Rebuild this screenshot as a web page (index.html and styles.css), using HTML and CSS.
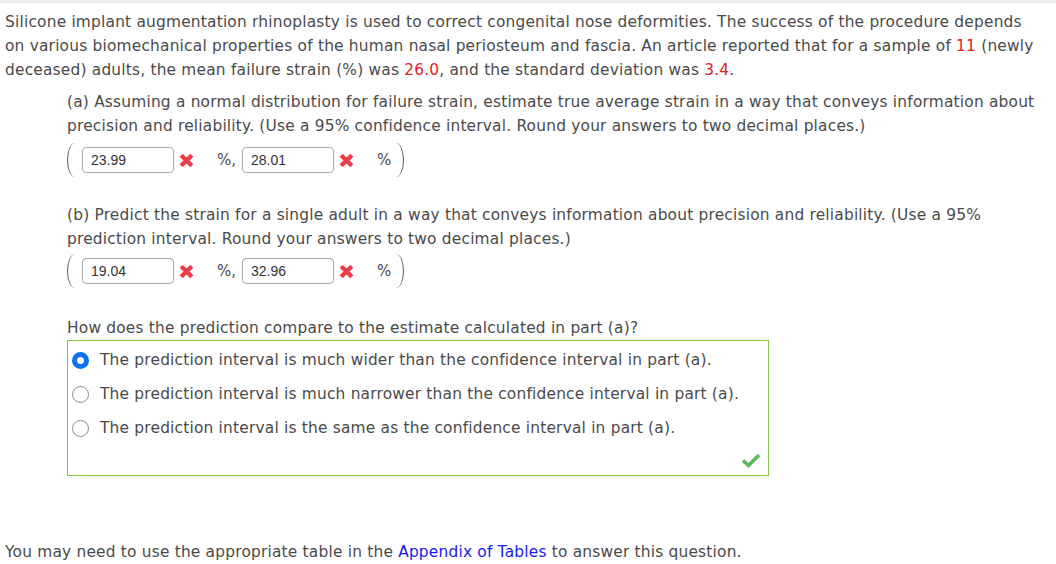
FILE: index.html
```html
<!DOCTYPE html>
<html>
<head>
<meta charset="utf-8">
<link rel="stylesheet" href="styles.css">
</head>
<body>
<div class="topbar"></div>
<p class="intro">Silicone implant augmentation rhinoplasty is used to correct congenital nose deformities. The success of the procedure depends on various biomechanical properties of the human nasal periosteum and fascia. An article reported that for a sample of <span class="red">11</span> (newly deceased) adults, the mean failure strain (%) was <span class="red">26.0</span>, and the standard deviation was <span class="red">3.4</span>.</p>

<div class="part">
  <p class="ptext">(a) Assuming a normal distribution for failure strain, estimate true average strain in a way that conveys information about precision and reliability. (Use a 95% confidence interval. Round your answers to two decimal places.)</p>
  <div class="answer-row rowa">
    <span class="paren left"></span>
    <span class="box">23.99</span>
    <svg class="xicon" viewBox="0 0 14 14"><path d="M2 2 L12 12 M12 2 L2 12"/></svg>
    <span class="unit">%,</span>
    <span class="box">28.01</span>
    <svg class="xicon" viewBox="0 0 14 14"><path d="M2 2 L12 12 M12 2 L2 12"/></svg>
    <span class="unit last">%</span>
    <span class="paren right"></span>
  </div>
</div>

<div class="part partb">
  <p class="ptext">(b) Predict the strain for a single adult in a way that conveys information about precision and reliability. (Use a 95% prediction interval. Round your answers to two decimal places.)</p>
  <div class="answer-row">
    <span class="paren left"></span>
    <span class="box">19.04</span>
    <svg class="xicon" viewBox="0 0 14 14"><path d="M2 2 L12 12 M12 2 L2 12"/></svg>
    <span class="unit">%,</span>
    <span class="box">32.96</span>
    <svg class="xicon" viewBox="0 0 14 14"><path d="M2 2 L12 12 M12 2 L2 12"/></svg>
    <span class="unit last">%</span>
    <span class="paren right"></span>
  </div>
</div>

<div class="part partc">
  <p class="ptext">How does the prediction compare to the estimate calculated in part (a)?</p>
  <div class="choices">
    <div class="choice"><span class="radio on"></span>The prediction interval is much wider than the confidence interval in part (a).</div>
    <div class="choice"><span class="radio"></span>The prediction interval is much narrower than the confidence interval in part (a).</div>
    <div class="choice"><span class="radio"></span>The prediction interval is the same as the confidence interval in part (a).</div>
    <svg class="check" viewBox="0 0 20 16"><path d="M2 8.5 L7.5 13.5 L18 3"/></svg>
  </div>
</div>

<p class="footer">You may need to use the appropriate table in the <a href="#">Appendix of Tables</a> to answer this question.</p>
</body>
</html>
```

FILE: styles.css
```css
html, body {
  margin: 0;
  padding: 0;
  background: #fff;
}
body {
  font-family: "DejaVu Sans", Verdana, sans-serif;
  font-size: 15.4px;
  letter-spacing: 0.2px;
  line-height: 24px;
  color: #4a4a4a;
}
.topbar {
  height: 3px;
  background: #ececec;
}
.intro {
  margin: 7px 0 0 0;
  padding: 0 20px 0 5px;
}
.red { color: #e0201b; }
.part {
  margin: 8px 0 0 67px;
  padding-right: 16px;
}
.ptext { margin: 0; }
.answer-row {
  display: flex;
  align-items: center;
  height: 40px;
}
.rowa { margin-top: 2px; }
.paren {
  display: block;
  width: 8px;
  height: 34px;
  border: 0 solid #555;
  box-sizing: border-box;
}
.paren.left {
  border-left-width: 1.8px;
  border-radius: 100% 0 0 100% / 50% 0 0 50%;
  margin-right: 7px;
}
.paren.right {
  border-right-width: 1.8px;
  border-radius: 0 100% 100% 0 / 0 50% 50% 0;
  margin-left: 3px;
}
.box {
  display: block;
  width: 92px;
  height: 26px;
  box-sizing: border-box;
  border: 1px solid #a8a8a8;
  border-radius: 4px;
  font-family: "Liberation Sans", Arial, sans-serif;
  font-size: 14px;
  letter-spacing: 0;
  line-height: 24px;
  color: #333;
  padding-left: 8px;
}
.xicon {
  width: 15px;
  height: 15px;
  margin-left: 5px;
  fill: none;
  stroke: #ee3b44;
  stroke-width: 4;
  stroke-linecap: butt;
}
.unit {
  margin-left: 23px;
  width: 25px;
  letter-spacing: 0;
  font-size: 15px;
}
.unit.last { width: 16px; }
.partb { margin-top: 23px; }
.partc { margin-top: 25px; }
.choices {
  position: relative;
  width: 702px;
  height: 136px;
  box-sizing: border-box;
  margin-top: 0;
  border: 1px solid #8bc34a;
  padding-top: 2px;
}
.choice {
  display: flex;
  align-items: center;
  height: 34px;
  padding-left: 4px;
}
.radio {
  width: 17px;
  height: 17px;
  box-sizing: border-box;
  border-radius: 50%;
  border: 1.5px solid #8a8a8a;
  margin-right: 11px;
  flex: none;
}
.radio.on {
  border: 5px solid #0b6ff0;
}
.check {
  position: absolute;
  right: 7px;
  bottom: 7px;
  width: 20px;
  height: 16px;
  fill: none;
  stroke: #5cb85c;
  stroke-width: 3.6;
}
.footer {
  margin: 64px 0 0 5px;
}
.footer a {
  color: #1a1ae6;
  text-decoration: none;
}
```
